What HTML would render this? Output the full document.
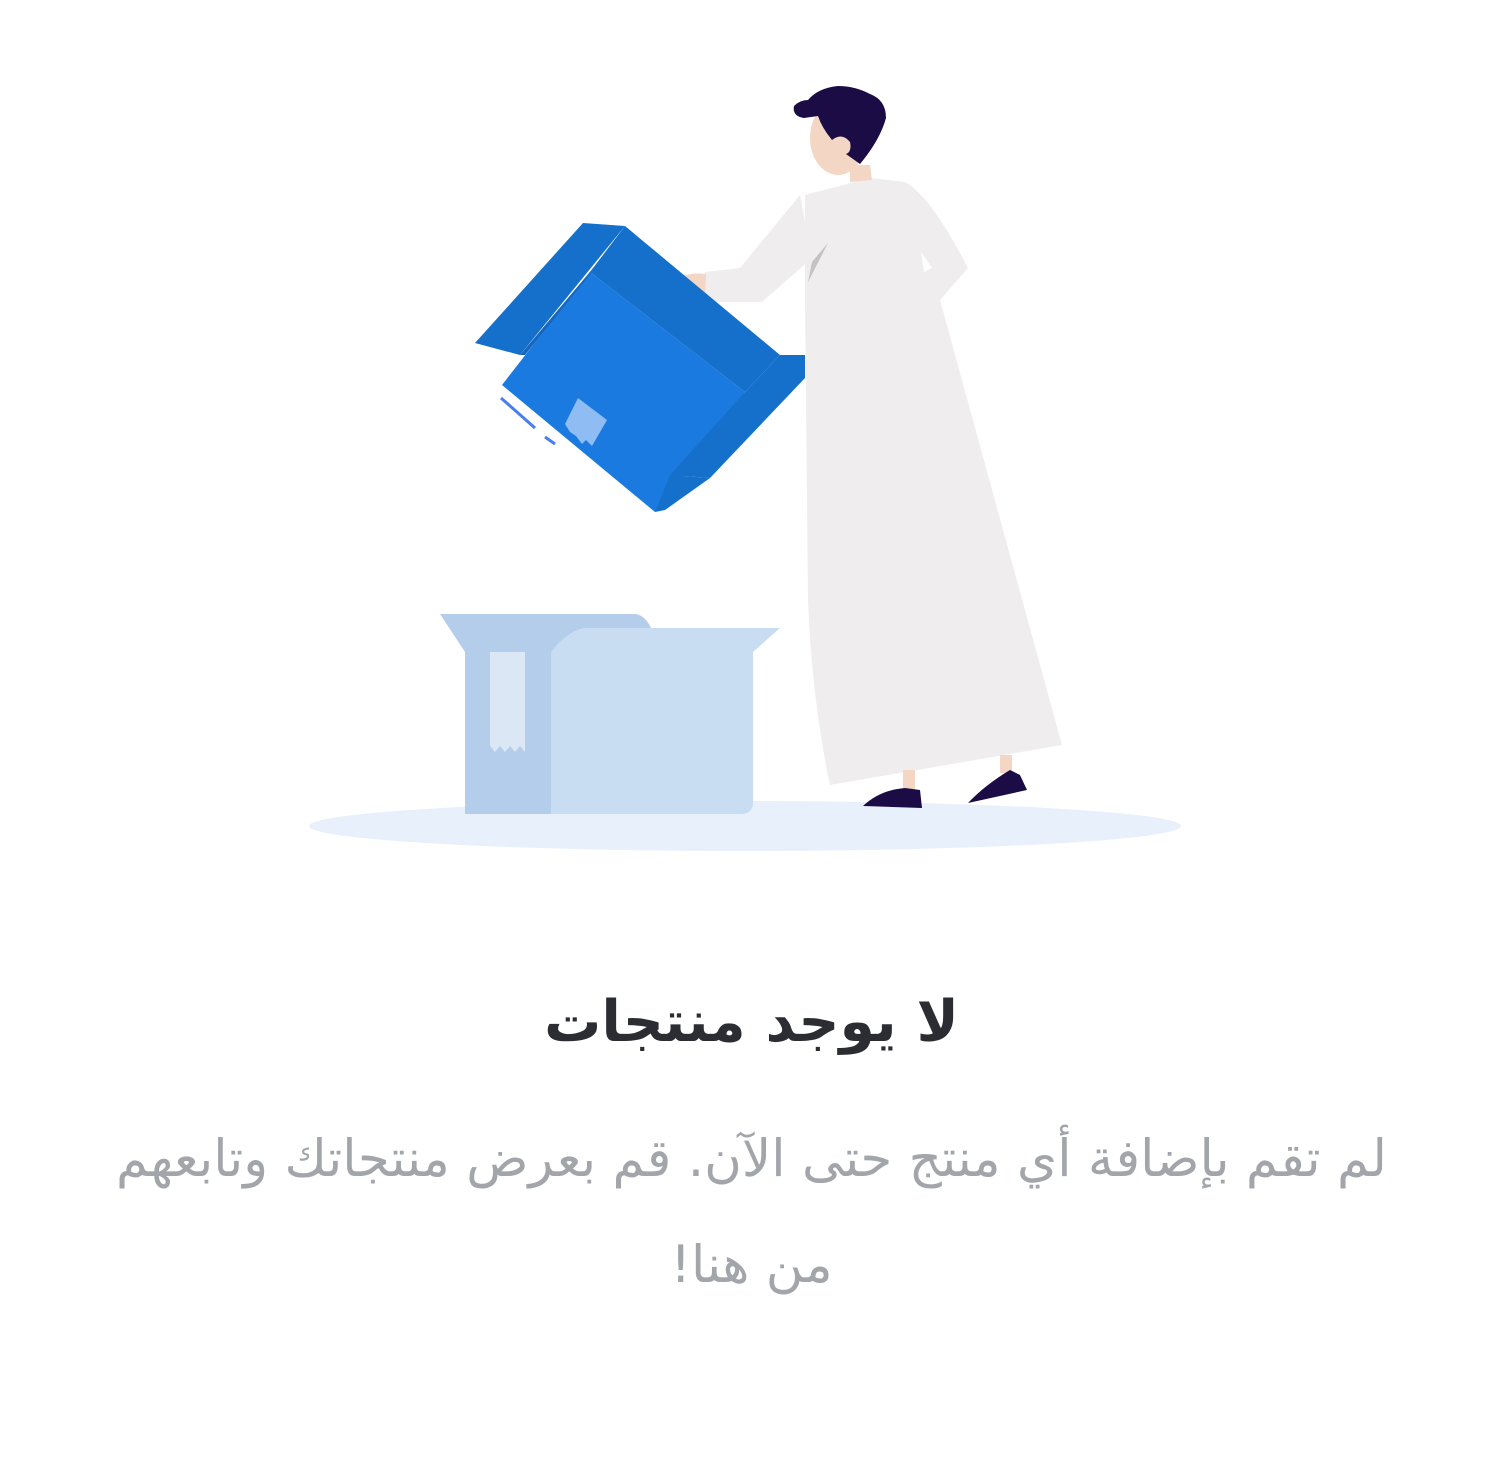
<!DOCTYPE html>
<html lang="ar" dir="rtl"><head><meta charset="utf-8">
<style>
html,body{margin:0;padding:0;background:#fff;width:1503px;height:1460px;overflow:hidden}
svg{position:absolute;left:0;top:0}
.t{position:absolute;left:0;width:1503px;text-align:center;font-family:"DejaVu Sans","Liberation Sans",sans-serif;white-space:nowrap}
#h{top:985px;font-size:57px;font-weight:bold;color:#2b2d33;line-height:75px}
#p{top:1106px;font-size:51.5px;color:#a2a5aa;line-height:106px}
</style></head><body>
<svg width="1503" height="900" viewBox="0 0 1503 900">
<ellipse cx="745" cy="826" rx="436" ry="25" fill="#e8f0fb"/>
<path d="M440 614 L636 614 Q646 616 652 630 L551 652 L465 652 Z" fill="#b3cdea"/>
<path d="M584 628 L780 628 L753 652 L551 652 Q566 632 584 628 Z" fill="#c8ddf2"/>
<rect x="465" y="652" width="86" height="162" fill="#b3cdea"/>
<path d="M551 652 H753 V802 Q753 814 741 814 H551 Z" fill="#c8ddf2"/>
<path d="M490 652 H525 V752 L520 746 L515 752 L510 746 L505 752 L500 746 L495 752 L490 746 Z" fill="#dbe7f4"/>
<path d="M805 195 L870 178 L905 182 Q930 195 968 268 L940 300 L1062 745 L830 785 Q812 700 808 600 L805 300 Z" fill="#efeded"/>
<path d="M800 195 L740 268 L705 272 L705 302 L762 302 L812 258 Z" fill="#efeded"/>
<path d="M828 243 L808 282 L812 262 Z" fill="#c4c2c4"/>
<path d="M921 252 L932 268 L924 272 Z" fill="#fff"/>
<path d="M678 278 Q690 272 706 274 L705 295 Q690 296 680 290 Z" fill="#f3d6c4"/>
<path d="M850 165 L870 165 L872 180 L850 182 Z" fill="#f3d6c4"/>
<ellipse cx="838" cy="138" rx="28" ry="37" fill="#f3d6c4"/>
<path d="M808 100 Q800 100 794 106 Q792 116 804 118 L818 116 Q822 128 832 140 Q842 132 850 142 Q852 152 846 154 L860 164 Q880 140 886 118 Q886 100 870 94 Q855 86 838 86 Q818 88 808 100 Z" fill="#1c0c45"/>
<rect x="903" y="770" width="12" height="22" fill="#f3d6c4"/>
<rect x="1000" y="755" width="12" height="18" fill="#f3d6c4"/>
<path d="M863 806 Q880 790 905 788 L920 790 L922 808 Z" fill="#1c0c45"/>
<path d="M968 803 Q985 785 1010 770 L1020 775 L1027 790 Z" fill="#1c0c45"/>
<path d="M502 385 L590 272 L745 392 L655 512 Z" fill="#1a7ae0"/>
<path d="M475 343 L583 223 L625 226 L520 355 Z" fill="#1570cc"/>
<path d="M625 226 L595 268 L525 355 L520 355 L600 260 Z" fill="#1566bf"/>
<path d="M625 226 L780 355 L745 392 L590 272 Z" fill="#1570cc"/>
<path d="M805 355 L805 378 L710 478 L670 475 L745 392 L780 355 Z" fill="#1570cc"/>
<path d="M655 512 L670 475 L710 478 L665 510 Z" fill="#1570cc"/>
<path d="M578 398 L607 420 L592 446 L586 440 L582 444 L576 436 L570 432 L565 424 Z" fill="#8fbcf3"/>
<path d="M501 398 L535 428 M545 437 L555 444" stroke="#4a7df0" stroke-width="3"/>
</svg>
<div class="t" id="h">لا يوجد منتجات</div>
<div class="t" id="p">لم تقم بإضافة أي منتج حتى الآن. قم بعرض منتجاتك وتابعهم<br>من هنا!</div>
</body></html>
